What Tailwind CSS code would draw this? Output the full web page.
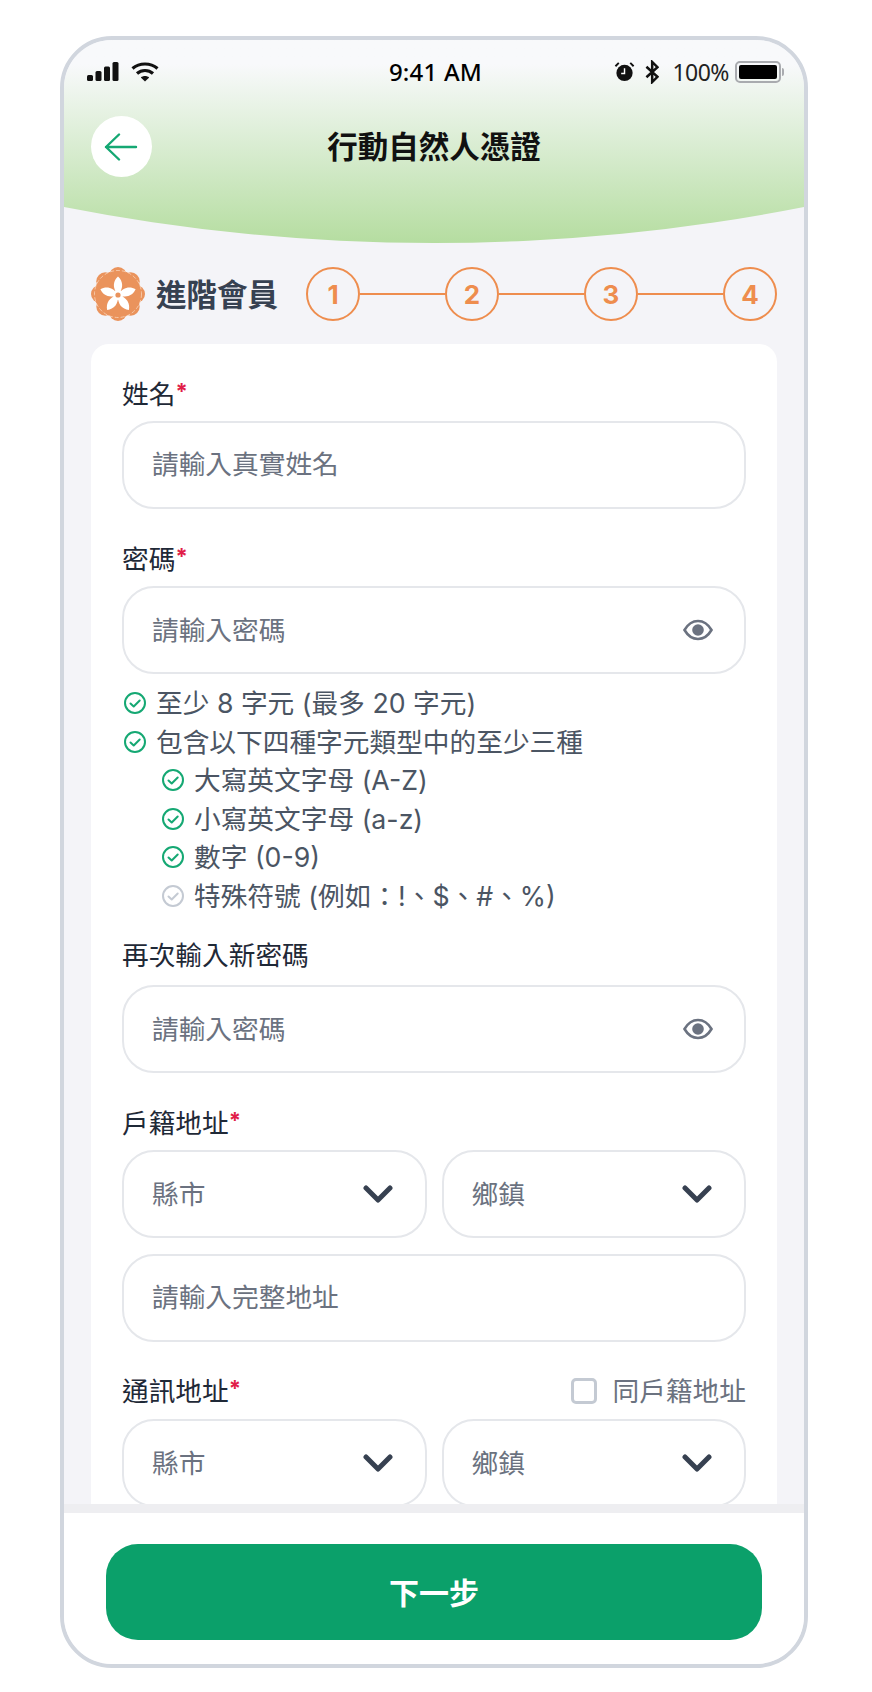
<!DOCTYPE html>
<html lang="zh-Hant">
<head>
    <meta charset="UTF-8">
    <script src="https://cdn.jsdelivr.net/npm/@tailwindcss/browser@4"></script>
    <title>行動自然人憑證</title>
</head>
<body class="bg-white font-['Noto_Sans','Noto_Sans_CJK_TC',sans-serif]">
    <!--Phone frame-->
    <div class="ml-[60px] mt-[36px] w-[748px] h-[1632px] border-4 border-[#d1d6de] rounded-[52px] overflow-hidden bg-[#f4f4f8] flex flex-col">

        <!--Header-->
        <header class="h-[203px] shrink-0 bg-linear-to-b from-[#f8f9fb] from-[12%] to-[#b5dda0] [clip-path:circle(1919px_at_50%_-1716px)]">
            <!--Status bar-->
            <div class="h-[62px] pt-[2px] pl-[23px] pr-[20px] flex items-center text-black">
                <div class="flex items-center gap-[12px] w-[250px]">
                    <svg width="32" height="20" viewBox="0 0 32 20" fill="#111"><rect x="0" y="13" width="6" height="6" rx="1.5"/><rect x="8.500" y="9" width="6" height="10" rx="1.500"/><rect x="17" y="4.500" width="6" height="14.500" rx="1.500"/><rect x="25.500" y="0" width="6" height="19" rx="1.500"/></svg>
                    <svg width="28" height="20" viewBox="0 0 28 20" fill="none" stroke="#111" stroke-width="3.200"><path d="M1.500 6.500C8.500 .5 19.500 .5 26.500 6.500"/><path d="M6 11.500C10.500 7.500 17.500 7.500 22 11.500"/><path d="M14 19.500L9.800 15.500C12 13.500 16 13.500 18.200 15.500Z" fill="#111" stroke="none"/></svg>
                </div>
                <div class="flex-1 text-center text-[24px] font-medium leading-none pr-[80px] tracking-[0.2px]">9:41 AM</div>
                <div class="flex items-center w-[170px]">
                    <svg width="22" height="22" viewBox="0 0 22 22"><circle cx="11" cy="12" r="8.500" fill="#111"/><path d="M1.500 5L5 1.500M20.500 5L17 1.500" stroke="#111" stroke-width="2"/><path d="M11 7v5.500H7.500" stroke="#fff" stroke-width="1.500" fill="none"/></svg>
                    <svg class="ml-[10px]" width="15" height="24" viewBox="0 0 15 24" fill="none" stroke="#111" stroke-width="2.600"><path d="M1.500 6.500L13 17 7.500 22.500V1.500L13 7 1.500 17.500"/></svg>
                    <span class="ml-[13px] text-[23px] leading-none text-[#222] tracking-[-0.5px]">100%</span>
                    <div class="ml-[6px] w-[46px] h-[22px] rounded-[5px] border-2 border-[#a9abaf] p-[2px] shrink-0"><div class="w-full h-full bg-black rounded-[2px]"></div></div>
                    <div class="ml-[1px] w-[2px] h-[8px] bg-[#a9abaf] rounded-r-sm shrink-0"></div>
                </div>
            </div>
            <!--Title row-->
            <div class="relative mt-[14px] pl-[27px] flex items-center">
                <div class="w-[61px] h-[61px] rounded-full bg-white flex items-center justify-center">
                    <svg class="ml-[-2px]" width="34" height="28" viewBox="0 0 34 28" fill="none" stroke="#15a873" stroke-width="2.400" stroke-linecap="round" stroke-linejoin="round"><path d="M32 14H2M15 1.500L2 14l13 12.500"/></svg>
                </div>
                <h1 class="ml-[75px] w-[414px] text-center text-[30.500px] font-bold text-[#111] leading-none">行動自然人憑證</h1>
            </div>
        </header>

        <!--Scrollable content-->
        <main class="flex-1 min-h-0 overflow-hidden px-[27px]">
            <!--Member level and steps-->
            <div class="mt-[24px] flex items-center h-[54px]">
                <svg width="54" height="54" viewBox="0 0 54 54" class="shrink-0">
                    <g fill="#ea935c">
                        <circle cx="27" cy="27" r="23.500"/>
                        <circle cx="27" cy="9" r="9"/><circle cx="39.700" cy="14.300" r="9"/><circle cx="45" cy="27" r="9"/><circle cx="39.700" cy="39.700" r="9"/>
                        <circle cx="27" cy="45" r="9"/><circle cx="14.300" cy="39.700" r="9"/><circle cx="9" cy="27" r="9"/><circle cx="14.300" cy="14.300" r="9"/>
                    </g>
                    <circle cx="27" cy="27" r="23.500" fill="none" stroke="#fbdcc6" stroke-width="0.700" stroke-dasharray="4 2"/>
                    <g fill="#fff">
                        <path d="M27 28C21 21 22 14 27 9.500C32 14 33 21 27 28Z"/>
                        <path d="M27 28C21 21 22 14 27 9.500C32 14 33 21 27 28Z" transform="rotate(72 27 28)"/>
                        <path d="M27 28C21 21 22 14 27 9.500C32 14 33 21 27 28Z" transform="rotate(144 27 28)"/>
                        <path d="M27 28C21 21 22 14 27 9.500C32 14 33 21 27 28Z" transform="rotate(216 27 28)"/>
                        <path d="M27 28C21 21 22 14 27 9.500C32 14 33 21 27 28Z" transform="rotate(288 27 28)"/>
                        <circle cx="27" cy="28" r="5"/>
                    </g>
                    <circle cx="27" cy="28" r="2.600" fill="#ea935c"/>
                </svg>
                <span class="ml-[11px] text-[30.500px] font-bold text-[#374151] leading-none whitespace-nowrap">進階會員</span>
                <div class="ml-[28px] flex-1 flex items-center font-['Inter','Noto_Sans_CJK_TC',sans-serif]">
                    <div class="w-[54px] h-[54px] shrink-0 rounded-full border-2 border-[#ee8d4e] flex items-center justify-center text-[26px] font-bold text-[#ee8d4e]">1</div>
                    <div class="flex-1 h-[2px] bg-[#ee8d4e]"></div>
                    <div class="w-[54px] h-[54px] shrink-0 rounded-full border-2 border-[#ee8d4e] flex items-center justify-center text-[26px] font-bold text-[#ee8d4e]">2</div>
                    <div class="flex-1 h-[2px] bg-[#ee8d4e]"></div>
                    <div class="w-[54px] h-[54px] shrink-0 rounded-full border-2 border-[#ee8d4e] flex items-center justify-center text-[26px] font-bold text-[#ee8d4e]">3</div>
                    <div class="flex-1 h-[2px] bg-[#ee8d4e]"></div>
                    <div class="w-[54px] h-[54px] shrink-0 rounded-full border-2 border-[#ee8d4e] flex items-center justify-center text-[26px] font-bold text-[#ee8d4e]">4</div>
                </div>
            </div>

            <!--Form card-->
            <form class="mt-[23px] bg-white rounded-t-[18px] px-[31px] pt-[30px] pb-[40px] text-[26.700px] font-['Inter','Noto_Sans_CJK_TC',sans-serif]">
                <label class="block h-[38px] leading-[35px] mb-[9px] text-[#1f2937]">姓名<span class="text-[#e11d48] text-[22px] font-bold align-[5px]">*</span></label>
                <input type="text" placeholder="請輸入真實姓名" class="block w-full h-[88px] border-2 border-[#e5e7eb] rounded-[32px] pl-[28px] pr-[28px] pb-[2px] placeholder:text-[#6b7280] outline-none">

                <label class="block h-[38px] leading-[35px] mt-[30px] mb-[9px] text-[#1f2937]">密碼<span class="text-[#e11d48] text-[22px] font-bold align-[5px]">*</span></label>
                <div class="flex items-center w-full h-[88px] border-2 border-[#e5e7eb] rounded-[32px] pl-[28px] pr-[31px]">
                    <input type="password" placeholder="請輸入密碼" class="flex-1 min-w-0 placeholder:text-[#6b7280] outline-none">
                    <svg width="30" height="22" viewBox="0 0 30 22" fill="none"><path d="M1.500 11C5 5 9.500 2 15 2s10 3 13.500 9C25 17 20.500 20 15 20S5 17 1.500 11Z" stroke="#6b7280" stroke-width="2.600"/><circle cx="15" cy="11" r="5.800" fill="#6b7280"/></svg>
                </div>

                <!--Password rules-->
                <ul class="mt-[10px] text-[26.700px] leading-[38.500px] text-[#4b5563]">
                    <li class="flex items-center gap-[10px] h-[38.500px]">
                        <svg class="ml-[2px] shrink-0" width="22" height="22" viewBox="0 0 22 22" fill="none" stroke="#15a873" stroke-width="2"><circle cx="11" cy="11" r="10"/><path d="M6.500 11.500l3.200 3 6-6" stroke-linecap="round" stroke-linejoin="round"/></svg>
                        <span>至少 8 字元 (最多 20 字元)</span>
                    </li>
                    <li class="flex items-center gap-[10px] h-[38.500px]">
                        <svg class="ml-[2px] shrink-0" width="22" height="22" viewBox="0 0 22 22" fill="none" stroke="#15a873" stroke-width="2"><circle cx="11" cy="11" r="10"/><path d="M6.500 11.500l3.200 3 6-6" stroke-linecap="round" stroke-linejoin="round"/></svg>
                        <span>包含以下四種字元類型中的至少三種</span>
                    </li>
                    <li class="flex items-center gap-[10px] h-[38.500px] pl-[40px]">
                        <svg class="shrink-0" width="22" height="22" viewBox="0 0 22 22" fill="none" stroke="#15a873" stroke-width="2"><circle cx="11" cy="11" r="10"/><path d="M6.500 11.500l3.200 3 6-6" stroke-linecap="round" stroke-linejoin="round"/></svg>
                        <span>大寫英文字母 (A-Z)</span>
                    </li>
                    <li class="flex items-center gap-[10px] h-[38.500px] pl-[40px]">
                        <svg class="shrink-0" width="22" height="22" viewBox="0 0 22 22" fill="none" stroke="#15a873" stroke-width="2"><circle cx="11" cy="11" r="10"/><path d="M6.500 11.500l3.200 3 6-6" stroke-linecap="round" stroke-linejoin="round"/></svg>
                        <span>小寫英文字母 (a-z)</span>
                    </li>
                    <li class="flex items-center gap-[10px] h-[38.500px] pl-[40px]">
                        <svg class="shrink-0" width="22" height="22" viewBox="0 0 22 22" fill="none" stroke="#15a873" stroke-width="2"><circle cx="11" cy="11" r="10"/><path d="M6.500 11.500l3.200 3 6-6" stroke-linecap="round" stroke-linejoin="round"/></svg>
                        <span>數字 (0-9)</span>
                    </li>
                    <li class="flex items-center gap-[10px] h-[38.500px] pl-[40px]">
                        <svg class="shrink-0" width="22" height="22" viewBox="0 0 22 22" fill="none" stroke="#c4cad3" stroke-width="2"><circle cx="11" cy="11" r="10"/><path d="M6.500 11.500l3.200 3 6-6" stroke-linecap="round" stroke-linejoin="round"/></svg>
                        <span>特殊符號 (例如：!、$、#、%)</span>
                    </li>
                </ul>

                <label class="block h-[38px] leading-[35px] mt-[23px] mb-[9px] text-[#1f2937]">再次輸入新密碼</label>
                <div class="flex items-center w-full h-[88px] border-2 border-[#e5e7eb] rounded-[32px] pl-[28px] pr-[31px]">
                    <input type="password" placeholder="請輸入密碼" class="flex-1 min-w-0 placeholder:text-[#6b7280] outline-none">
                    <svg width="30" height="22" viewBox="0 0 30 22" fill="none"><path d="M1.500 11C5 5 9.500 2 15 2s10 3 13.500 9C25 17 20.500 20 15 20S5 17 1.500 11Z" stroke="#6b7280" stroke-width="2.600"/><circle cx="15" cy="11" r="5.800" fill="#6b7280"/></svg>
                </div>

                <label class="block h-[38px] leading-[35px] mt-[30px] mb-[9px] text-[#1f2937]">戶籍地址<span class="text-[#e11d48] text-[22px] font-bold align-[5px]">*</span></label>
                <div class="grid grid-cols-2 gap-[15px]">
                    <div class="flex items-center justify-between h-[88px] border-2 border-[#e5e7eb] rounded-[32px] pl-[28px] pr-[32px] text-[#6b7280]">
                        <span>縣市</span>
                        <svg width="30" height="19" viewBox="0 0 30 19" fill="none" stroke="#374151" stroke-width="5" stroke-linecap="round" stroke-linejoin="round"><path d="M3 3l12 12L27 3"/></svg>
                    </div>
                    <div class="flex items-center justify-between h-[88px] border-2 border-[#e5e7eb] rounded-[32px] pl-[28px] pr-[32px] text-[#6b7280]">
                        <span>鄉鎮</span>
                        <svg width="30" height="19" viewBox="0 0 30 19" fill="none" stroke="#374151" stroke-width="5" stroke-linecap="round" stroke-linejoin="round"><path d="M3 3l12 12L27 3"/></svg>
                    </div>
                </div>
                <input type="text" placeholder="請輸入完整地址" class="block mt-[16px] w-full h-[88px] border-2 border-[#e5e7eb] rounded-[32px] pl-[28px] pr-[28px] pb-[2px] placeholder:text-[#6b7280] outline-none">

                <div class="flex items-center justify-between h-[38px] mt-[30px] mb-[9px]">
                    <label class="leading-[35px] text-[#1f2937] mb-[3px]">通訊地址<span class="text-[#e11d48] text-[22px] font-bold align-[5px]">*</span></label>
                    <div class="flex items-center gap-[16px] text-[#6b7280]">
                        <span class="w-[26px] h-[26px] rounded-[5px] border-[3px] border-[#c4cad3] bg-white"></span>
                        <span>同戶籍地址</span>
                    </div>
                </div>
                <div class="grid grid-cols-2 gap-[15px]">
                    <div class="flex items-center justify-between h-[88px] border-2 border-[#e5e7eb] rounded-[32px] pl-[28px] pr-[32px] text-[#6b7280]">
                        <span>縣市</span>
                        <svg width="30" height="19" viewBox="0 0 30 19" fill="none" stroke="#374151" stroke-width="5" stroke-linecap="round" stroke-linejoin="round"><path d="M3 3l12 12L27 3"/></svg>
                    </div>
                    <div class="flex items-center justify-between h-[88px] border-2 border-[#e5e7eb] rounded-[32px] pl-[28px] pr-[32px] text-[#6b7280]">
                        <span>鄉鎮</span>
                        <svg width="30" height="19" viewBox="0 0 30 19" fill="none" stroke="#374151" stroke-width="5" stroke-linecap="round" stroke-linejoin="round"><path d="M3 3l12 12L27 3"/></svg>
                    </div>
                </div>
            </form>
        </main>

        <!--Footer-->
        <footer class="shrink-0 h-[160px] bg-white border-t-[9px] border-[#eeeef1] pt-[31px] pl-[42px] pr-[42px]">
            <button type="button" class="w-full h-[96px] rounded-[32px] bg-[#0ba06a] text-white text-[30px] font-bold">下一步</button>
        </footer>
    </div>
</body>
</html>
